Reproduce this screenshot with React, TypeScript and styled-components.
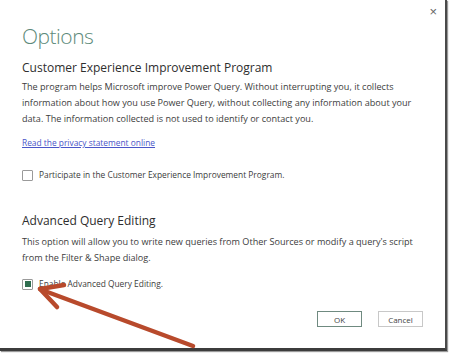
import { FC } from "react";
import styled, { createGlobalStyle } from "styled-components";

const GlobalStyle = createGlobalStyle`
    html, body {
        margin: 0;
        padding: 0;
        background: #ffffff;
    }
    body {
        font-family: "Open Sans", "Liberation Sans", sans-serif;
        color: #3a3a3a;
    }
`

const Checkbox: FC<{ checked?: boolean }> = ({ checked }) => (
    <Box>{checked && <Mark />}</Box>
)

const Arrow: FC = () => (
    <ArrowLayer width="450" height="355" viewBox="0 0 450 355">
        <g stroke="#b84a2c" strokeWidth="4.5" strokeLinecap="round" fill="none">
            <line x1="193" y1="346" x2="42" y2="290" />
            <line x1="40" y1="289" x2="64" y2="285" />
            <line x1="40" y1="289" x2="57" y2="307" />
        </g>
    </ArrowLayer>
)

export default function App() {
    return (
        <Page>
            <GlobalStyle />
            <Dialog>
                <Close>×</Close>
                <Title>Options</Title>
                <Heading>Customer Experience Improvement Program</Heading>
                <Text>
                    The program helps Microsoft improve Power Query. Without interrupting you, it collects<br />
                    information about how you use Power Query, without collecting any information about your<br />
                    data. The information collected is not used to identify or contact you.
                </Text>
                <Link href="#">Read the privacy statement online</Link>
                <Option $top={18}>
                    <Checkbox />
                    <span>Participate in the Customer Experience Improvement Program.</span>
                </Option>
                <Heading $top={30}>Advanced Query Editing</Heading>
                <Text $top={4}>
                    This option will allow you to write new queries from Other Sources or modify a query's script<br />
                    from the Filter &amp; Shape dialog.
                </Text>
                <Option $top={11}>
                    <Checkbox checked />
                    <span>Enable Advanced Query Editing.</span>
                </Option>
                <Footer>
                    <Button $primary>OK</Button>
                    <Button>Cancel</Button>
                </Footer>
            </Dialog>
            <Arrow />
        </Page>
    )
}

const Page = styled('div')`
    position: relative;
    width: 450px;
    height: 355px;
    overflow: hidden;
    background: #ffffff;
`

const Dialog = styled('div')`
    position: relative;
    box-sizing: border-box;
    width: 447px;
    height: 351px;
    padding: 21px 0 0 22px;
    display: flex;
    flex-direction: column;
    align-items: flex-start;
    background: #ffffff;
    border-right: 2px solid #4a4a4a;
    border-bottom: 3px solid #3c3c3c;
    box-shadow: 1px 1px 1px #9a9a9a;
`

const Close = styled('div')`
    position: absolute;
    top: 4px;
    right: 8px;
    font-family: "Liberation Sans", sans-serif;
    font-size: 13px;
    color: #666666;
`

const Title = styled('h1')`
    margin: 0;
    font-size: 21px;
    font-weight: 300;
    letter-spacing: -0.5px;
    line-height: 30px;
    color: #5d8a7a;
`

const Heading = styled('h2')<{ $top?: number }>`
    margin: ${p => p.$top ?? 8}px 0 0;
    font-size: 12px;
    font-weight: 400;
    line-height: 18px;
    color: #2e2e2e;
`

const Text = styled('p')<{ $top?: number }>`
    margin: ${p => p.$top ?? 2}px 0 0;
    font-size: 9.1px;
    line-height: 16px;
    white-space: nowrap;
    color: #3c3c3c;
`

const Link = styled('a')`
    margin-top: 9px;
    font-size: 8.4px;
    line-height: 14px;
    color: #4a55c8;
    text-decoration: underline;
`

const Option = styled('label')<{ $top?: number }>`
    margin-top: ${p => p.$top ?? 13}px;
    display: flex;
    align-items: center;
    gap: 6px;
    font-size: 8.4px;
    line-height: 14px;
    color: #3c3c3c;
`

const Box = styled('span')`
    box-sizing: border-box;
    width: 11px;
    height: 11px;
    display: flex;
    align-items: center;
    justify-content: center;
    border: 1px solid #9a9a9a;
    border-radius: 1px;
    background: #ffffff;
`

const Mark = styled('span')`
    width: 6px;
    height: 6px;
    background: #2f6e4f;
`

const Footer = styled('div')`
    margin-top: auto;
    margin-bottom: 21px;
    align-self: flex-end;
    margin-right: 22px;
    display: flex;
    gap: 16px;
`

const Button = styled('button')<{ $primary?: boolean }>`
    width: 45px;
    height: 16px;
    padding: 0;
    font-family: "Open Sans", "Liberation Sans", sans-serif;
    font-size: 8px;
    color: #444444;
    background: #ffffff;
    border: 1px solid ${p => (p.$primary ? "#6f8a80" : "#c8c8c8")};
`

const ArrowLayer = styled('svg')`
    position: absolute;
    left: 0;
    top: 0;
    pointer-events: none;
`
